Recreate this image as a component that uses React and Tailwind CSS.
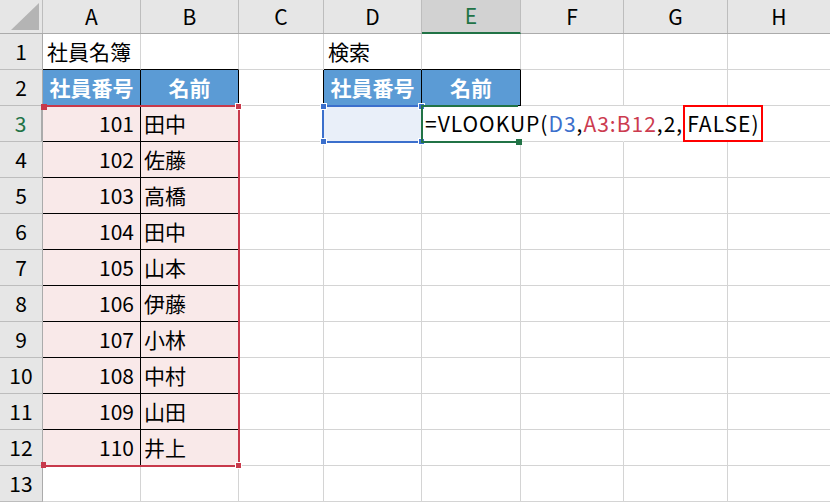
import React from "react";

const cols = ["A", "B", "C", "D", "E", "F", "G", "H"];
const colW = ["w-[98px]", "w-[98px]", "w-[85px]", "w-[98px]", "w-[99px]", "w-[103px]", "w-[104px]", "w-[103px]"];

const staff = [
  [101, "田中"],
  [102, "佐藤"],
  [103, "高橋"],
  [104, "田中"],
  [105, "山本"],
  [106, "伊藤"],
  [107, "小林"],
  [108, "中村"],
  [109, "山田"],
  [110, "井上"],
];

const font = { fontFamily: '"Noto Sans CJK JP", "Noto Sans", sans-serif' };

function Formula() {
  return (
    <div className="flex h-full items-stretch whitespace-nowrap w-max pl-[3px] relative z-10 text-[21px] leading-none tracking-[1px]">
      <span className="self-center">=VLOOKUP(</span>
      <span className="self-center text-[#3b6fcc]">D3</span>
      <span className="self-center">,</span>
      <span className="self-center text-[#cc3b4f]">A3:B12</span>
      <span className="self-center">,2,</span>
      <span className="flex items-center border-2 border-[#ff0000] -my-px pl-[2px] pr-px">FALSE)</span>
    </div>
  );
}

function Cell({ r, c }) {
  const inTable = c <= 1 && r >= 3 && r <= 12;
  const isHead = (c <= 1 || c === 3 || c === 4) && r === 2;
  let cls = "h-[36px] border-r border-b border-[#d4d4d4] shrink-0 flex items-center overflow-visible " + colW[c];

  if (isHead) cls += " bg-[#5b9bd5] text-white font-bold justify-center border-black";
  if (inTable) cls += " bg-[#f9e9e9] border-b-black border-r-black";
  if (r === 1 && (c <= 1 || c === 3 || c === 4)) cls += " border-b-black";
  if (r === 2 && c === 2) cls += " border-r-black";
  if (r === 3 && c === 3) cls += " bg-[#e9eff9]";
  if (r === 3 && (c === 4 || c === 5 || c === 6)) cls += " border-r-transparent";

  let content = null;
  if (r === 1 && c === 0) content = <span className="pl-[4px]">社員名簿</span>;
  if (r === 1 && c === 3) content = <span className="pl-[4px]">検索</span>;
  if (isHead) content = c === 0 || c === 3 ? "社員番号" : "名前";
  if (inTable) {
    const s = staff[r - 3];
    content = c === 0 ? <span className="ml-auto pr-[6px]">{s[0]}</span> : <span className="pl-[3px]">{s[1]}</span>;
  }
  if (r === 3 && c === 4) content = <Formula />;

  return <div className={cls}>{content}</div>;
}

export default function App() {
  const rows = Array.from({ length: 13 }, (_, i) => i + 1);
  return (
    <div className="w-[830px] h-[502px] overflow-hidden bg-white text-black text-[21px] relative" style={font}>
      {/* column headers */}
      <div className="flex h-[34px] bg-[#e6e6e6] border-b border-[#ababab]">
        <div className="w-[43px] shrink-0 border-r border-[#bdbdbd] relative">
          <svg className="absolute left-[11px] top-[3px]" width="29" height="28" viewBox="0 0 29 28">
            <polygon points="28,0 28,27 0,27" fill="#b4b4b4" />
          </svg>
        </div>
        {cols.map((l, i) => (
          <div
            key={l}
            className={
              "shrink-0 flex items-center justify-center border-r border-[#bdbdbd] " +
              colW[i] +
              (l === "E" ? " bg-[#d2d2d2] text-[#217346] border-b-2 border-b-[#217346] -mb-px" : "")
            }
          >
            {l}
          </div>
        ))}
      </div>

      {rows.map((r) => (
        <div key={r} className="flex">
          <div
            className={
              "w-[43px] h-[36px] shrink-0 flex items-center justify-center bg-[#e6e6e6] border-b border-[#bdbdbd] border-r border-r-[#ababab]" +
              (r === 3 ? " bg-[#d2d2d2] text-[#217346] border-r-2 border-r-[#217346]" : "")
            }
          >
            {r}
          </div>
          {cols.map((_, c) => (
            <Cell key={c} r={r} c={c} />
          ))}
        </div>
      ))}

      {/* reference range A3:B12 */}
      <div className="absolute left-[42px] top-[105px] w-[198px] h-[362px] border-2 border-l-0 border-[#c8394b] pointer-events-none">
        <div className="absolute -left-[1px] -top-[3px] w-[6px] h-[6px] bg-[#c8394b]" />
        <div className="absolute -right-[4px] -top-[4px] w-[7px] h-[7px] bg-[#c8394b] border border-white" />
        <div className="absolute -right-[4px] -bottom-[4px] w-[7px] h-[7px] bg-[#c8394b] border border-white" />
        <div className="absolute -left-[1px] -bottom-[3px] w-[5px] h-[6px] bg-[#c8394b]" />
      </div>

      {/* reference range D3 */}
      <div className="absolute left-[322px] top-[105px] w-[101px] h-[38px] border-2 border-[#3b6fcc] pointer-events-none">
        <div className="absolute -left-[4px] -top-[4px] w-[7px] h-[7px] bg-[#3b6fcc] border border-white" />
        <div className="absolute -right-[4px] -top-[4px] w-[7px] h-[7px] bg-[#3b6fcc] border border-white" />
        <div className="absolute -right-[4px] -bottom-[4px] w-[7px] h-[7px] bg-[#3b6fcc] border border-white" />
        <div className="absolute -left-[4px] -bottom-[4px] w-[7px] h-[7px] bg-[#3b6fcc] border border-white" />
      </div>

      {/* active cell E3 */}
      <div className="absolute left-[421px] top-[105px] w-[97px] h-[38px] border-2 border-r-0 border-[#217346] pointer-events-none">
        <div className="absolute -right-[4px] -bottom-[4px] w-[6px] h-[6px] bg-[#217346]" />
      </div>
    </div>
  );
}
